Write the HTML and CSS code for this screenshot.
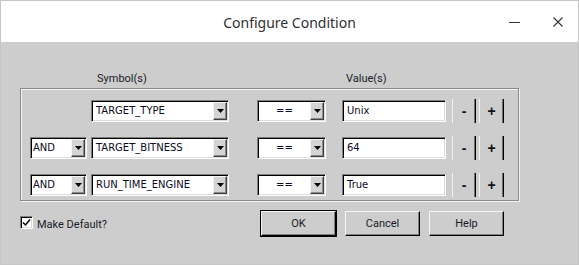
FILE: index.html
```html
<!DOCTYPE html>
<html>
<head>
<meta charset="utf-8">
<link rel="stylesheet" href="styles.css">
</head>
<body>
<div class="window">
  <div class="titlebar">
    <div class="tb-side"></div>
    <div class="title">Configure Condition</div>
    <div class="tb-side tb-controls">
      <span class="wm wm-min"><svg width="11" height="11" viewBox="0 0 11 11"><line x1="0" y1="5.5" x2="11" y2="5.5" stroke="#333" stroke-width="1"/></svg></span>
      <span class="wm wm-close"><svg width="10" height="10" viewBox="0 0 10 10"><path d="M0.5 0.5 L9.5 9.5 M9.5 0.5 L0.5 9.5" stroke="#333" stroke-width="1.1" fill="none"/></svg></span>
    </div>
  </div>
  <div class="content">
    <div class="headers">
      <span class="h-symbol">Symbol(s)</span>
      <span class="h-value">Value(s)</span>
    </div>
    <div class="group">
      <div class="row">
        <span class="spacer-and"></span>
        <span class="combo c-symbol"><span class="c-text">TARGET_TYPE</span><span class="arrow"><svg width="7" height="4" viewBox="0 0 7 4"><polygon points="0,0 7,0 3.5,4" fill="#000"/></svg></span></span>
        <span class="combo c-op"><span class="c-text center">==</span><span class="arrow"><svg width="7" height="4" viewBox="0 0 7 4"><polygon points="0,0 7,0 3.5,4" fill="#000"/></svg></span></span>
        <span class="field">Unix</span>
        <span class="pm minus">-</span>
        <span class="pm plus">+</span>
      </div>
      <div class="row">
        <span class="combo c-and"><span class="c-text tight">AND</span><span class="arrow"><svg width="7" height="4" viewBox="0 0 7 4"><polygon points="0,0 7,0 3.5,4" fill="#000"/></svg></span></span>
        <span class="combo c-symbol"><span class="c-text">TARGET_BITNESS</span><span class="arrow"><svg width="7" height="4" viewBox="0 0 7 4"><polygon points="0,0 7,0 3.5,4" fill="#000"/></svg></span></span>
        <span class="combo c-op"><span class="c-text center">==</span><span class="arrow"><svg width="7" height="4" viewBox="0 0 7 4"><polygon points="0,0 7,0 3.5,4" fill="#000"/></svg></span></span>
        <span class="field">64</span>
        <span class="pm minus">-</span>
        <span class="pm plus">+</span>
      </div>
      <div class="row">
        <span class="combo c-and"><span class="c-text tight">AND</span><span class="arrow"><svg width="7" height="4" viewBox="0 0 7 4"><polygon points="0,0 7,0 3.5,4" fill="#000"/></svg></span></span>
        <span class="combo c-symbol"><span class="c-text">RUN_TIME_ENGINE</span><span class="arrow"><svg width="7" height="4" viewBox="0 0 7 4"><polygon points="0,0 7,0 3.5,4" fill="#000"/></svg></span></span>
        <span class="combo c-op"><span class="c-text center">==</span><span class="arrow"><svg width="7" height="4" viewBox="0 0 7 4"><polygon points="0,0 7,0 3.5,4" fill="#000"/></svg></span></span>
        <span class="field">True</span>
        <span class="pm minus">-</span>
        <span class="pm plus">+</span>
      </div>
    </div>
    <div class="footer">
      <label class="check">
        <span class="box"><svg width="9" height="9" viewBox="0 0 9 9"><path d="M1 4.5 L3.5 7 L8 1.5" stroke="#000" stroke-width="1.5" fill="none"/></svg></span>
        <span class="check-label">Make Default?</span>
      </label>
      <div class="buttons">
        <span class="btn default">OK</span>
        <span class="btn">Cancel</span>
        <span class="btn">Help</span>
      </div>
    </div>
  </div>
</div>
</body>
</html>
```
FILE: styles.css
```css
* { box-sizing: border-box; }
html, body { margin: 0; padding: 0; }
body {
  width: 579px;
  height: 265px;
  overflow: hidden;
  font-family: Roboto, "Noto Sans", sans-serif;
  background: #cdcdcd;
}
.window {
  width: 579px;
  height: 265px;
  border: 1px solid #c6c6c6;
  background: #cdcdcd;
  display: flex;
  flex-direction: column;
}
.titlebar {
  height: 41px;
  flex: none;
  background: #fff;
  display: grid;
  grid-template-columns: 1fr auto 1fr;
  align-items: center;
}
.title {
  font-family: "Noto Sans", sans-serif;
  font-size: 14px;
  color: #2f2f2f;
  padding-top: 1px;
}
.tb-controls {
  display: flex;
  justify-content: flex-end;
  align-items: center;
  padding-right: 15px;
}
.wm { display: flex; }
.wm-min { margin-right: 33px; margin-top: 1px; }
.wm-close { margin-top: 1px; }

.content {
  flex: 1;
  padding: 0 19px;
  display: flex;
  flex-direction: column;
}
.headers {
  margin-top: 29px;
  height: 16px;
  line-height: 16px;
  font-size: 11px;
  color: #1a1a28;
  display: flex;
}
.h-symbol { margin-left: 77px; width: 249px; }
.group {
  margin-top: 1px;
  width: 499px;
  border: 1px solid #8a8a8a;
  box-shadow: inset 1px 1px 0 #f4f4f4, 1px 1px 0 #f4f4f4;
  padding: 10px 0 3px 9px;
  display: flex;
  flex-direction: column;
  gap: 13px;
}
.row {
  height: 24px;
  display: flex;
  align-items: center;
}
.combo, .field, .box {
  background: #fff;
  border: 1px solid;
  border-color: #808080 #fff #fff #808080;
  box-shadow: inset 1px 1px 0 #000, inset -1px -1px 0 #dcdcdc;
  padding: 1px;
}
.combo {
  height: 22px;
  display: flex;
}
.spacer-and { width: 57px; flex: none; }
.c-and { width: 57px; }
.c-symbol { width: 138px; margin-left: 4px; }
.c-op { width: 69px; margin-left: 28px; }
.c-text {
  flex: 1;
  font-family: "DejaVu Sans", Verdana, sans-serif;
  font-size: 10px;
  line-height: 18px;
  padding-left: 3px;
  color: #0a0a24;
  white-space: nowrap;
  overflow: hidden;
}
.c-text.tight { padding-left: 1px; }
.c-text.center { text-align: center; padding-left: 0; }
.arrow {
  width: 14px;
  height: 18px;
  flex: none;
  background: #d4d4d4;
  border: 1px solid;
  border-color: #f4f4f4 #404040 #404040 #f4f4f4;
  box-shadow: inset -1px -1px 0 #8a8a8a;
  display: flex;
  align-items: center;
  justify-content: center;
  padding-bottom: 1px;
}
.arrow svg { display: block; }
.field {
  width: 104px;
  height: 22px;
  margin-left: 16px;
  font-family: "DejaVu Sans", Verdana, sans-serif;
  font-size: 10px;
  line-height: 18px;
  padding-left: 4px;
  color: #0a0a24;
}
.pm {
  height: 24px;
  display: flex;
  align-items: center;
  justify-content: center;
  border-left: 1px solid #f2f2f2;
  border-right: 1px solid #000;
  box-shadow: inset -1px 0 0 #6e6e6e;
  font-family: "Liberation Sans", Arial, sans-serif;
  font-weight: bold;
  font-size: 14px;
  color: #111;
}
.minus { width: 24px; margin-left: 6px; padding-bottom: 1px; }
.plus { width: 25px; margin-left: 3px; padding-bottom: 1px; }

.footer {
  margin-top: 9px;
  display: flex;
  align-items: flex-start;
}
.check {
  display: flex;
  align-items: flex-start;
  margin-top: 6px;
}
.box {
  width: 13px;
  height: 13px;
  display: flex;
  align-items: center;
  justify-content: center;
}
.box svg { display: block; }
.check-label {
  margin-left: 4px;
  font-size: 11px;
  line-height: 14px;
  padding-top: 2px;
  color: #1a1a28;
}
.buttons {
  margin-left: auto;
  margin-right: 55px;
  display: flex;
  gap: 9px;
}
.btn {
  width: 75px;
  height: 25px;
  margin-top: 1px;
  background: #cdcdcd;
  border: 1px solid;
  border-color: #f4f4f4 #000 #000 #f4f4f4;
  box-shadow: inset -1px -1px 0 #808080;
  display: flex;
  align-items: center;
  justify-content: center;
  font-size: 11px;
  color: #1a1a28;
}
.btn.default {
  outline: 1px solid #000;
}
```
